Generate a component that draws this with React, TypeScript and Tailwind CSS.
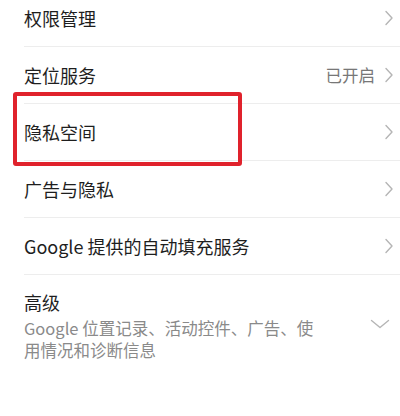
const rows = [
  { title: "权限管理" },
  { title: "定位服务", value: "已开启" },
  { title: "隐私空间" },
  { title: "广告与隐私" },
  { title: "Google 提供的自动填充服务" },
];

function ChevronRight() {
  return (
    <svg width="10" height="16" viewBox="0 0 10 16" fill="none" className="shrink-0">
      <path d="M2 1.5 L8 8 L2 14.5" stroke="#b5b5b5" strokeWidth="1.4" strokeLinecap="round" strokeLinejoin="round" />
    </svg>
  );
}

function ChevronDown() {
  return (
    <svg width="20" height="10" viewBox="0 0 20 10" fill="none" className="shrink-0">
      <path d="M1.5 1.5 L10 8.5 L18.5 1.5" stroke="#b5b5b5" strokeWidth="1.4" strokeLinecap="round" strokeLinejoin="round" />
    </svg>
  );
}

export default function App() {
  return (
    <div
      className="relative h-[416px] w-[400px] overflow-hidden bg-white"
      style={{ fontFamily: '"Noto Sans CJK SC", "Noto Sans", sans-serif' }}
    >
      <div className="-mt-[10px]">
        {rows.map((row) => (
          <div key={row.title} className="ml-[24px] flex h-[57px] items-center border-b border-[#ededed] pr-[6px]">
            <span className="flex-1 text-[18px] text-[#1e1e1e]">{row.title}</span>
            {row.value && <span className="mr-[9px] text-[16.5px] text-[#777]">{row.value}</span>}
            <ChevronRight />
          </div>
        ))}
        <div className="ml-[24px] flex items-center pr-[10px] pt-[12px]">
          <div className="w-[300px]">
            <div className="text-[18px] leading-[30px] text-[#1e1e1e]">高级</div>
            <div className="text-[16.5px] leading-[22px] text-[#8a8a8a]">
              Google 位置记录、活动控件、广告、使用情况和诊断信息
            </div>
          </div>
          <div className="flex flex-1 justify-end">
            <ChevronDown />
          </div>
        </div>
      </div>
      <div className="absolute left-[13px] top-[92px] h-[74px] w-[229px] rounded-[3px] border-[4px] border-[#e0222c]" />
    </div>
  );
}
